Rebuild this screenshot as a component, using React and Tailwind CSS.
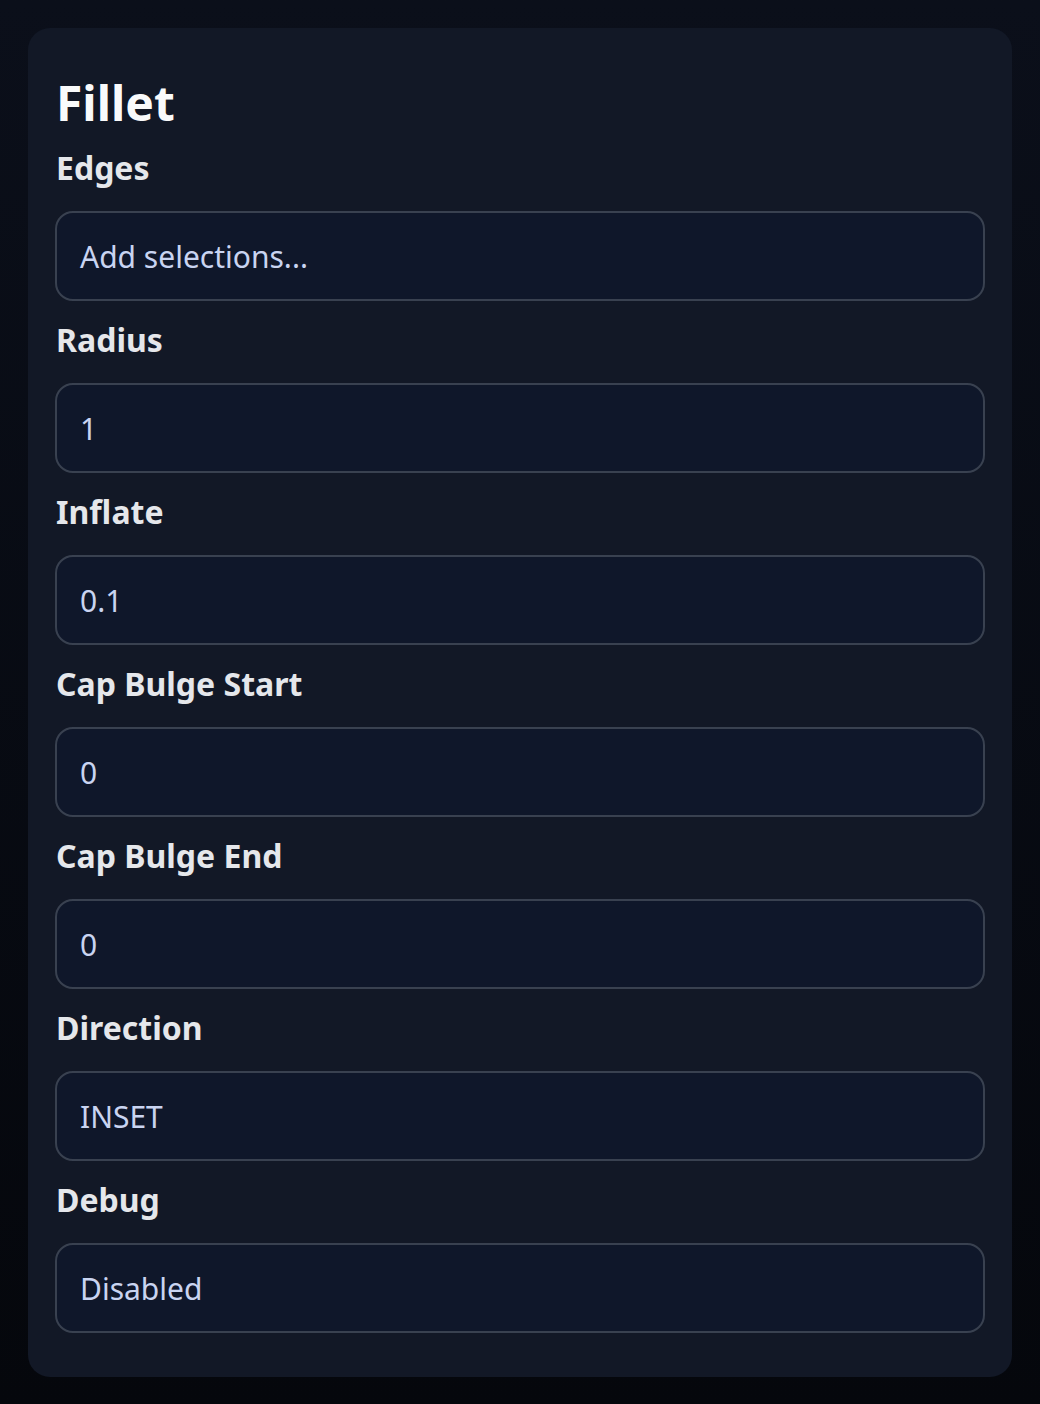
const fields = [
  { label: "Edges", value: "Add selections..." },
  { label: "Radius", value: "1" },
  { label: "Inflate", value: "0.1" },
  { label: "Cap Bulge Start", value: "0" },
  { label: "Cap Bulge End", value: "0" },
  { label: "Direction", value: "INSET" },
  { label: "Debug", value: "Disabled" },
];

function Field({ label, value, first }) {
  return (
    <div className={first ? "mt-[9px]" : "mt-[15px]"}>
      <div className="text-[32px] leading-[48px] font-bold text-[#e5e7eb]">{label}</div>
      <div className="mt-[19px] -mx-px h-[90px] flex items-center rounded-[18px] border-2 border-[#394150] bg-[#0f172a] px-[23px] text-[30px] text-[#c9d4f1]">
        {value}
      </div>
    </div>
  );
}

export default function App() {
  return (
    <div
      className="w-full min-h-screen bg-gradient-to-b from-[#0b0f1a] to-[#05070c] p-[28px]"
      style={{ fontFamily: '"Noto Sans", "Open Sans", sans-serif' }}
    >
      <div className="rounded-[22px] bg-[#121826] px-[28px] pt-[28px] pb-[44px]">
        <h1 className="mt-[15px] text-[48px] leading-[64px] font-bold text-[#f9fafb]">Fillet</h1>
        {fields.map((f, i) => (
          <Field key={f.label} label={f.label} value={f.value} first={i === 0} />
        ))}
      </div>
    </div>
  );
}
